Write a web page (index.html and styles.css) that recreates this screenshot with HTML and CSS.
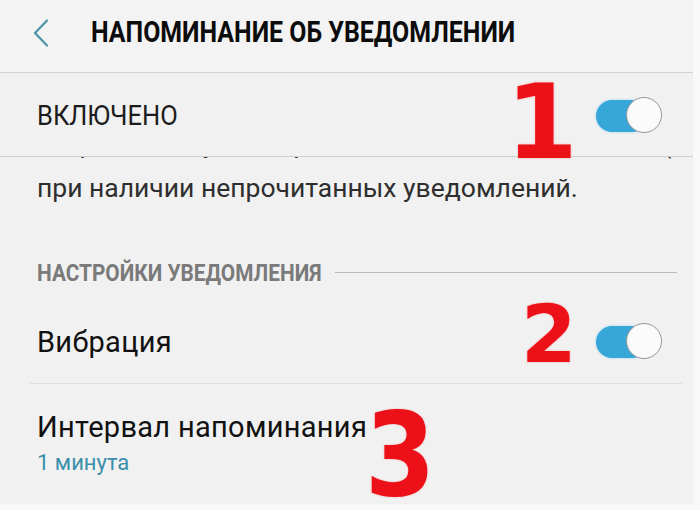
FILE: index.html
```html
<!DOCTYPE html>
<html lang="ru">
<head>
<meta charset="utf-8">
<title>Напоминание об уведомлении</title>
<link rel="stylesheet" href="styles.css">
</head>
<body>
<div class="frame">
  <div class="screen">
    <header class="appbar">
      <svg class="back" width="18" height="28" viewBox="0 0 18 28" aria-hidden="true">
        <path d="M15 1.5 L3 14 L15 26.5" fill="none" stroke="#4f97a9" stroke-width="2.4" stroke-linecap="round" stroke-linejoin="round"/>
      </svg>
      <h1 class="title"><span class="squeeze">НАПОМИНАНИЕ ОБ УВЕДОМЛЕНИИ</span></h1>
    </header>

    <div class="row row-main">
      <span class="caps-label"><span class="squeeze-light">ВКЛЮЧЕНО</span></span>
      <div class="toggle"><div class="track"></div><div class="thumb"></div></div>
    </div>

    <div class="desc">
      <div class="desc-cut"><p class="desc-cut-text">Устройство будет периодически подавать сигнал (звук)</p></div>
      <p class="desc-text">при наличии непрочитанных уведомлений.</p>
    </div>

    <div class="section">
      <span class="section-title"><span class="squeeze-sec">НАСТРОЙКИ УВЕДОМЛЕНИЯ</span></span>
      <span class="section-line"></span>
    </div>

    <div class="row row-item">
      <span class="item-title">Вибрация</span>
      <div class="toggle"><div class="track"></div><div class="thumb"></div></div>
    </div>

    <div class="row-sub">
      <div class="item-title">Интервал напоминания</div>
      <div class="item-sub">1 минута</div>
    </div>

    <span class="mark mark1">1</span>
    <span class="mark mark2">2</span>
    <span class="mark mark3">3</span>
  </div>
</div>
</body>
</html>
```

FILE: styles.css
```css
html, body {
  margin: 0;
  padding: 0;
  background: #f7f7f7;
}

.frame {
  width: 700px;
  height: 510px;
  overflow: hidden;
  background: #f8f8f8;
}

.screen {
  position: relative;
  width: 693px;
  height: 504px;
  background: #f1f1f1;
  font-family: Roboto, "Noto Sans", "DejaVu Sans", sans-serif;
  color: #151515;
  overflow: hidden;
}

.appbar {
  display: flex;
  align-items: center;
  padding: 0 0 8px 32px;
  box-sizing: border-box;
  height: 73px;
  border-bottom: 1px solid #d2d2d2;
  background: #f3f3f3;
}

.back {
  display: block;
  margin-top: 1px;
}

.title {
  margin: 0 0 0 41px;
  font-size: 30px;
  font-weight: 700;
  line-height: 34px;
  color: #0c0c0c;
  white-space: nowrap;
}

.squeeze {
  display: inline-block;
  transform: scaleX(0.83);
  transform-origin: left center;
}

.row {
  display: flex;
  align-items: center;
  justify-content: space-between;
  padding: 0 31px 0 37px;
}

.row-main {
  border-bottom: 1px solid #d0d0d0;
  padding-top: 2px;
  box-sizing: border-box;
  height: 84px;
}

.caps-label {
  font-size: 28px;
  color: #1c1c1c;
  white-space: nowrap;
}

.squeeze-light {
  display: inline-block;
  transform: scaleX(0.91);
  transform-origin: left center;
}

.toggle {
  position: relative;
  width: 66px;
  height: 37px;
  flex: none;
}

.track {
  margin-top: 3px;
  width: 52px;
  height: 32px;
  border-radius: 16px;
  background: #37a6d9;
  box-shadow: 0 0 3px rgba(120, 200, 240, 0.6);
}

.thumb {
  position: absolute;
  right: 0;
  top: 0;
  width: 34px;
  height: 34px;
  border-radius: 50%;
  background: #fbfbfb;
  border: 1.5px solid #969696;
}

.desc {
  padding-left: 37px;
  height: 50px;
}

.desc-cut {
  height: 8px;
  overflow: hidden;
}

.desc-cut-text {
  margin: -32px 0 0 0;
  font-size: 26.5px;
  line-height: 38px;
  color: #2e2e2e;
  white-space: nowrap;
}

.desc-text {
  margin: 4px 0 0 0;
  font-size: 26.5px;
  line-height: 38px;
  color: #2e2e2e;
  white-space: nowrap;
}

.section {
  display: flex;
  align-items: center;
  padding: 51px 16px 12px 37px;
  height: 30px;
  box-sizing: content-box;
}

.section-title {
  font-size: 23px;
  font-weight: 700;
  color: #7a7a7a;
  white-space: nowrap;
  width: 292px;
}

.squeeze-sec {
  display: inline-block;
  transform: scaleX(0.905);
  transform-origin: left center;
}

.section-line {
  flex: 1;
  height: 1px;
  background: #b9b9b9;
  margin-left: 6px;
  margin-top: -2px;
}

.row-item {
  margin: 0 11px 0 30px;
  padding: 0 20px 0 7px;
  border-bottom: 1px solid #dedede;
  box-sizing: border-box;
  height: 84px;
}

.item-title {
  font-size: 29px;
  line-height: 32px;
  color: #111;
  letter-spacing: 0.3px;
  white-space: nowrap;
}

.row-sub {
  padding: 27px 0 0 37px;
}

.item-sub {
  margin-top: 6px;
  font-size: 22px;
  line-height: 28px;
  color: #3a8fab;
}

.mark {
  position: absolute;
  font-family: "DejaVu Sans", sans-serif;
  font-weight: 700;
  line-height: 1;
  color: #ec1118;
  text-shadow: 0 0 2px rgba(255, 60, 60, 0.45);
}

.mark1 {
  font-size: 103px;
  left: 506px;
  top: 71px;
}

.mark2 {
  font-size: 80px;
  left: 521px;
  top: 295px;
}

.mark3 {
  font-size: 115px;
  left: 365px;
  top: 398px;
  transform: scaleX(0.88);
  transform-origin: left top;
}
```
